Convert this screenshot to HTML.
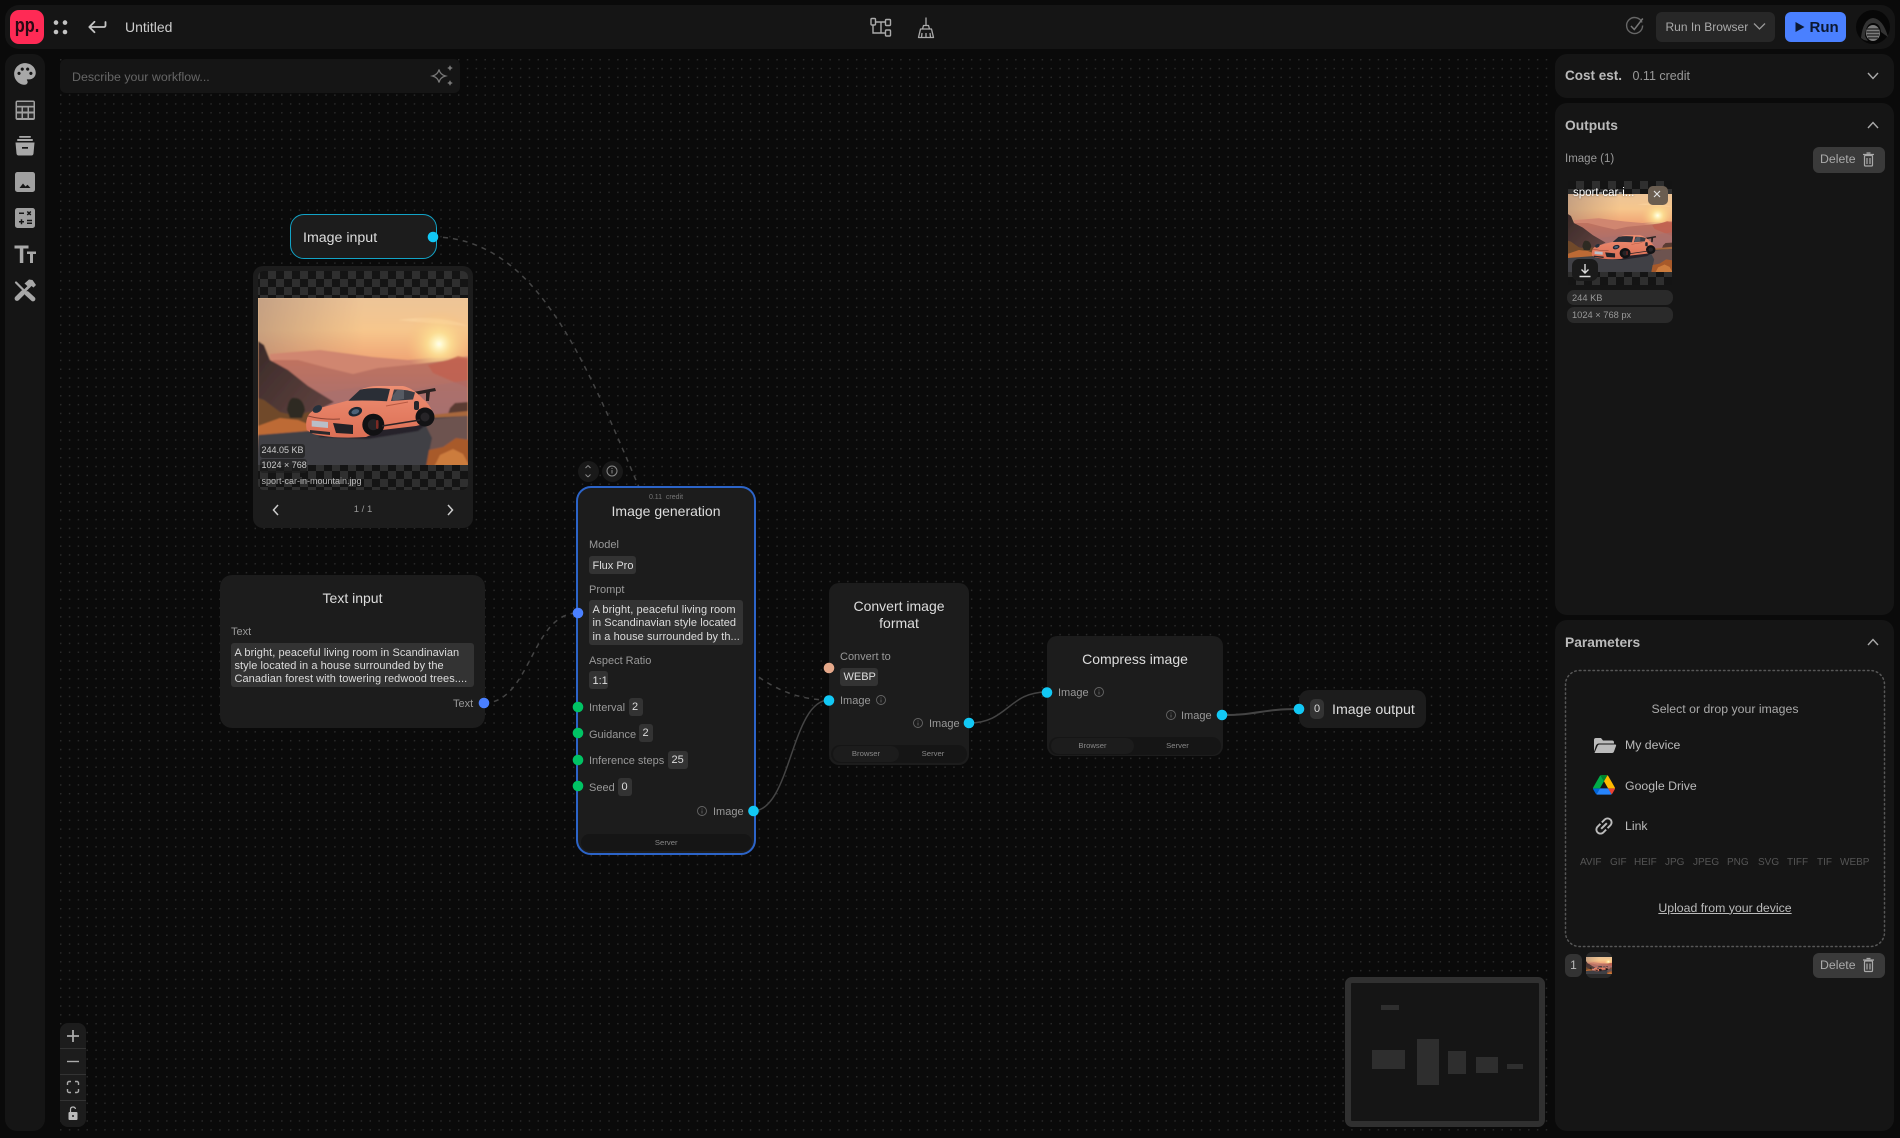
<!DOCTYPE html>
<html lang="en"><head><meta charset="utf-8"><title>Untitled</title>
<style>
*{box-sizing:border-box}
html,body{margin:0;padding:0;background:#0a0a0a;width:1900px;height:1138px;overflow:hidden}
body{position:relative;font-family:"Liberation Sans",Arial,sans-serif;color:#ddd}
.b{position:absolute}
.t{position:absolute;white-space:nowrap;line-height:16px;height:16px}
.c{text-align:center}
.node{position:absolute;background:#1c1c1c}
.chip{position:absolute;background:#333;border-radius:3px;color:#ddd;font-size:11px;line-height:18px;padding:0 3.5px;white-space:nowrap}
.lb{font-size:11px;color:#999;margin-top:1px}
.ck{background-color:#151515;background-image:repeating-conic-gradient(#2f2f2f 0 25%,#141414 0 50%);background-size:16px 16px}
.dl{position:absolute;background:#3a3a3a;border-radius:6px;color:#aaa;font-size:12.3px;line-height:25px;padding-left:7px}
svg{position:absolute;left:0;top:0;overflow:visible}
</style></head>
<body>
<svg width="0" height="0" style="position:absolute">
<defs>
<filter id="soft" x="-5%" y="-5%" width="110%" height="110%"><feGaussianBlur stdDeviation=".7"/></filter>
<linearGradient id="sky" x1="0" y1="0" x2="0" y2="1"><stop offset="0" stop-color="#ecc498"/><stop offset=".2" stop-color="#f6c68c"/><stop offset=".38" stop-color="#f0a474"/></linearGradient>
<linearGradient id="skyL" x1="0" y1="0" x2="1" y2="0"><stop offset="0" stop-color="#9b7c70" stop-opacity=".5"/><stop offset=".5" stop-color="#a8806c" stop-opacity="0"/></linearGradient>
<radialGradient id="sun" cx="181" cy="46" r="34" gradientUnits="userSpaceOnUse"><stop offset="0" stop-color="#fffdf0"/><stop offset=".1" stop-color="#fff8c8"/><stop offset=".35" stop-color="#fde394" stop-opacity=".8"/><stop offset="1" stop-color="#f7be7c" stop-opacity="0"/></radialGradient>
<linearGradient id="ml" x1="0" y1="0" x2="1" y2="1"><stop offset="0" stop-color="#3a2a28"/><stop offset="1" stop-color="#664643"/></linearGradient>
<linearGradient id="haze" x1="0" y1="0" x2="0" y2="1"><stop offset="0" stop-color="#c0725f"/><stop offset="1" stop-color="#a46f70"/></linearGradient>
<linearGradient id="carb" x1="0" y1="0" x2="0" y2="1"><stop offset="0" stop-color="#ee8e72"/><stop offset="1" stop-color="#dc6f55"/></linearGradient>
<symbol id="car" viewBox="0 0 210 167" preserveAspectRatio="none">
<g filter="url(#soft)">
<rect x="-2" y="-2" width="214" height="171" fill="url(#sky)"/>
<rect width="210" height="110" fill="url(#skyL)"/>
<path d="M140 22Q180 16 210 28Q170 25 140 22z" fill="#fbd7a4" opacity=".6"/>
<path d="M12 56L35 54L62 52L85 55L115 59L150 62L172 60L195 60L210 58V120H12z" fill="#d08670"/>
<rect width="210" height="66" fill="url(#sun)"/>
<path d="M15 62L40 62L70 70L95 76L120 70L160 66L185 63L200 60L210 62V120H15z" fill="url(#haze)"/>
<path d="M170 67L190 62L200 58L210 60V90L175 75z" fill="#c2604c" opacity=".75"/>
<path d="M60 95L110 88L150 92L210 82V118H60z" fill="#a86e6e" opacity=".6"/>
<path d="M0 43L6 47L12 62L30 72L50 88L76 104L60 112L30 122L0 132z" fill="url(#ml)"/>
<path d="M0 100L6 102L14 108L22 114L38 118L50 114L70 115L95 118L95 130L50 135L0 138z" fill="#6f4a2a"/>
<path d="M29 112Q31 98 37 100Q45 100 47 112L44 120L32 120z" fill="#2e2a20"/>
<path d="M0 128L22 120L40 122L55 128L60 136L0 138z" fill="#bd6a34"/>
<path d="M192 110L197 105L210 104V114L190 116z" fill="#5a3a30"/>
<path d="M172 117L210 113V119L172 121z" fill="#a8683c"/>
<path d="M0 137L50 133L170 120L210 118V169H-2z" fill="#3f3f45"/>
<path d="M165 122L210 118V169H168L174 140z" fill="#6d5350"/>
<path d="M168 169L171 152L185 149L198 140L212 142V169z" fill="#a85a2c"/>
<path d="M176 169L182 157L195 151L205 156L212 169z" fill="#cc7c3e"/>
<path d="M60 139L110 141L160 133L175 122L130 128L70 132z" fill="#252429"/>
</g>
<path d="M150 95L177 90L178 93L172 94L171 103L168 103L168 95L152 98z" fill="#2a2221"/>
<path d="M48.7 132Q47 124 50 118Q52 113 62 110L92 102L102 92Q110 88 120 88L145 88Q155 90 165 101Q174 108 175 118L174 124L158 128L124 132L108 139Q75 141 55 136z" fill="url(#carb)"/>
<path d="M90.3 102.7L102 91.7Q115 89 132 91L129 103.3Q110 102 90.3 102.7z" fill="#2a2e36"/>
<path d="M133 103L136 91.500Q148 91 157 94.500L155 101.500z" fill="#3a3c44"/>
<path d="M134.500 98L139 92L146 92L146 101L134.500 103z" fill="#565a63"/>
<ellipse cx="97.3" cy="113.7" rx="7" ry="4.5" transform="rotate(-18 97.3 113.7)" fill="#1c2733"/><ellipse cx="97.3" cy="113.7" rx="4" ry="2.4" transform="rotate(-18 97.3 113.7)" fill="#4d6278"/>
<ellipse cx="59.3" cy="111" rx="5" ry="3.4" transform="rotate(-30 59.3 111)" fill="#26303c"/>
<path d="M53.7 122.500L70 124L70 130L53.7 128.500z" fill="#b9bfc8"/>
<path d="M50 118Q65 122 82 121" stroke="#8d4636" stroke-width="1" fill="none"/>
<path d="M75 125L95 127L95 136L78 135z" fill="#222126"/>
<path d="M52 132L72 134L72 137L52 135z" fill="#2a282c"/>
<rect x="156" y="103" width="5" height="9" rx="2" fill="#26262b"/>
<path d="M128 108L150 104" stroke="#b85a42" stroke-width="1"/>
<circle cx="115.3" cy="126.700" r="11" fill="#111113"/><circle cx="115.3" cy="126.700" r="5.500" fill="#242225"/><rect x="118" y="122" width="2.500" height="9" rx="1.200" fill="#7c2a24"/>
<circle cx="167" cy="119" r="9.500" fill="#131315"/><circle cx="167" cy="119" r="4.500" fill="#262427"/>
<path d="M124 128L162 122" stroke="#2c2326" stroke-width="1.600"/>
</symbol>
</defs>
</svg>

<!-- canvas grid -->
<div class="b" style="left:60px;top:54px;width:1490px;height:1078px;background-image:radial-gradient(circle at .7px .7px,#2a2a2a .7px,transparent .95px);background-size:8.85px 8.85px;background-position:0 5px"></div>

<!-- chrome -->
<div class="b" style="left:5px;top:5px;width:1890px;height:44px;background:#151515;border-radius:14px"></div>
<div class="b" style="left:5px;top:54px;width:40px;height:1077px;background:#151515;border-radius:12px"></div>
<div class="b" style="left:10px;top:10px;width:34px;height:34px;background:#ff2a55;border-radius:9px"></div>
<div class="t" style="left:10px;top:17px;width:34px;height:18px;text-align:center;font-size:20px;font-weight:700;line-height:18px;color:#2a0a14;transform:scaleX(.82)">pp.</div>
<div class="t" style="left:125px;top:19px;font-size:14px;color:#ccc">Untitled</div>

<div class="b" style="left:60px;top:59px;width:400px;height:34px;background:#151515;border-radius:6px"></div>
<div class="t" style="left:72px;top:69px;font-size:12.4px;color:#666">Describe your workflow...</div>

<!-- header right -->
<div class="b" style="left:1656px;top:12px;width:119px;height:30px;background:#272727;border-radius:6px"></div>
<div class="t" style="left:1665.5px;top:18.5px;font-size:12px;color:#aaa">Run In Browser</div>
<div class="b" style="left:1785px;top:12px;width:61px;height:30px;background:#4a80ff;border-radius:6px"></div>
<div class="t" style="left:1809.5px;top:19.5px;font-size:15px;font-weight:700;color:#0c1830">Run</div>

<!-- right panels -->
<div class="b" style="left:1555px;top:54px;width:339px;height:44px;background:#151515;border-radius:12px"></div>
<div class="t" style="left:1565px;top:68px;font-size:13.5px;font-weight:700;color:#bbb">Cost est.</div>
<div class="t" style="left:1632.500px;top:68px;font-size:12.5px;color:#999">0.11 credit</div>

<div class="b" style="left:1555px;top:103px;width:339px;height:512px;background:#151515;border-radius:12px"></div>
<div class="t" style="left:1565px;top:118px;font-size:13.8px;font-weight:700;color:#bbb">Outputs</div>
<div class="t" style="left:1565px;top:151px;font-size:11.5px;color:#999">Image (1)</div>
<div class="dl" style="left:1813px;top:147px;width:72px;height:26px">Delete</div>

<div class="b ck" style="left:1568px;top:181px;width:104px;height:104px;background-position:0 0"></div>
<svg class="b" style="left:1568px;top:194px" width="104" height="78"><use href="#car" width="104" height="78"/></svg>
<div class="t" style="left:1573px;top:185px;font-size:11.5px;color:#fff;text-shadow:0 0 2px rgba(0,0,0,.6)">sport-car-i...</div>
<div class="b" style="left:1648px;top:186px;width:20px;height:19px;background:#6a5d50;border-radius:5px"></div>
<div class="b" style="left:1572px;top:259px;width:26px;height:22px;background:#1a1a1a;border-radius:7px"></div>
<div class="b" style="left:1567px;top:290px;width:106px;height:15px;background:#2a2a2a;border-radius:7px"></div>
<div class="t" style="left:1572px;top:289.5px;font-size:9.3px;color:#999">244 KB</div>
<div class="b" style="left:1567px;top:307px;width:106px;height:16px;background:#2a2a2a;border-radius:7px"></div>
<div class="t" style="left:1572px;top:307px;font-size:9.3px;color:#999">1024 × 768 px</div>

<div class="b" style="left:1555px;top:620px;width:339px;height:511px;background:#151515;border-radius:12px"></div>
<div class="t" style="left:1565px;top:635px;font-size:13.8px;font-weight:700;color:#bbb">Parameters</div>
<div class="t c" style="left:1565px;width:320px;top:701px;font-size:12.3px;color:#aaa">Select or drop your images</div>
<div class="t" style="left:1625px;top:737px;font-size:12.3px;color:#bbb">My device</div>
<div class="t" style="left:1625px;top:778px;font-size:12.3px;color:#bbb">Google Drive</div>
<div class="t" style="left:1625px;top:818px;font-size:12.3px;color:#bbb">Link</div>
<div style="font-size:10px;color:#555">
<span class="t" style="left:1580px;top:855px">AVIF</span><span class="t" style="left:1610px;top:855px">GIF</span><span class="t" style="left:1634px;top:855px">HEIF</span><span class="t" style="left:1665px;top:855px">JPG</span><span class="t" style="left:1693px;top:855px">JPEG</span><span class="t" style="left:1727px;top:855px">PNG</span><span class="t" style="left:1758px;top:855px">SVG</span><span class="t" style="left:1787px;top:855px">TIFF</span><span class="t" style="left:1817px;top:855px">TIF</span><span class="t" style="left:1840px;top:855px">WEBP</span>
</div>
<div class="t c" style="left:1565px;width:320px;top:899.5px;font-size:12.3px;color:#bbb;text-decoration:underline">Upload from your device</div>
<div class="t c" style="left:1565px;top:954px;width:17px;height:23px;line-height:23px;background:#333;border-radius:6px;font-size:12px;color:#bbb">1</div>
<div class="b" style="left:1586px;top:952px;width:26px;height:26px;background:#2a2a2a;border-radius:6px"></div>
<svg class="b" style="left:1586px;top:957px" width="26" height="17"><use href="#car" width="26" height="17"/></svg>
<div class="dl" style="left:1813px;top:953px;width:72px;height:25px">Delete</div>

<!-- minimap -->
<div class="b" style="left:1345px;top:977px;width:200px;height:150px;background:#151515;border:6.5px solid #303030;border-radius:7px"></div>
<div class="b" style="left:1381px;top:1005px;width:18px;height:5px;background:#2e2e2e"></div>
<div class="b" style="left:1372px;top:1050px;width:33px;height:19px;background:#2e2e2e"></div>
<div class="b" style="left:1417px;top:1039px;width:22px;height:46px;background:#2e2e2e"></div>
<div class="b" style="left:1448px;top:1051px;width:18px;height:23px;background:#2e2e2e"></div>
<div class="b" style="left:1476px;top:1057px;width:22px;height:16px;background:#2e2e2e"></div>
<div class="b" style="left:1507px;top:1064px;width:16px;height:5px;background:#2e2e2e"></div>

<!-- zoom controls -->
<div class="b" style="left:60px;top:1023px;width:26px;height:104px;background:#1c1c1c;border-radius:8px"></div>
<div class="b" style="left:60px;top:1048px;width:26px;height:1px;background:#333"></div>
<div class="b" style="left:60px;top:1074px;width:26px;height:1px;background:#333"></div>
<div class="b" style="left:60px;top:1100px;width:26px;height:1px;background:#333"></div>

<!-- wires -->
<svg width="1900" height="1138" fill="none">
<path d="M433 237C631 237 631 700 829 700" stroke="#444" stroke-width="1.5" stroke-dasharray="5 5"/>
<path d="M484 703C531 703 531 613 578 613" stroke="#444" stroke-width="1.5" stroke-dasharray="5 5"/>
<path d="M753 811C791 811 791 700 829 700" stroke="#444" stroke-width="1.5"/>
<path d="M969 723C1008 723 1008 692 1047 692" stroke="#444" stroke-width="1.5"/>
<path d="M1222 715C1260 715 1260 709 1299 709" stroke="#444" stroke-width="2"/>
</svg>

<!-- image input -->
<div class="node" style="left:290px;top:214px;width:147px;height:45px;border:1.2px solid #12a3c6;border-radius:14px"></div>
<div class="t" style="left:303px;top:229.5px;font-size:14.2px;color:#ddd">Image input</div>
<div class="node" style="left:253px;top:266px;width:220px;height:262px;border-radius:10px"></div>
<div class="b ck" style="left:258px;top:271px;width:210px;height:219px;border-radius:6px;background-position:2px 0"></div>
<svg class="b" style="left:258px;top:298px" width="210" height="167"><use href="#car" width="210" height="167"/></svg>
<div class="b" style="left:260px;top:444px;width:45px;height:14px;background:rgba(30,30,30,.7);border-radius:3px"></div>
<div class="b" style="left:260px;top:459px;width:47px;height:14px;background:rgba(30,30,30,.7);border-radius:3px"></div>
<div class="t" style="left:261.5px;top:440.5px;font-size:9px;color:#ccc;line-height:19px">244.05 KB</div>
<div class="t" style="left:261.5px;top:456px;font-size:9px;color:#ccc;line-height:19px">1024 × 768</div>
<div class="t" style="left:261.5px;top:473px;font-size:9px;color:#bbb;line-height:17px">sport-car-in-mountain.jpg</div>
<div class="t c" style="left:253px;width:220px;top:502px;font-size:9.5px;color:#999">1 / 1</div>

<!-- text input -->
<div class="node" style="left:220px;top:575px;width:265px;height:153px;border-radius:12px"></div>
<div class="t c" style="left:220px;width:265px;top:590px;font-size:14px;color:#ddd">Text input</div>
<div class="t lb" style="left:231px;top:623px">Text</div>
<div class="b" style="left:231px;top:643px;width:243px;height:44px;background:#333;border-radius:3px"></div>
<div class="t" style="left:234.5px;top:645px;font-size:11px;color:#ddd;letter-spacing:.06px">A bright, peaceful living room in Scandinavian</div>
<div class="t" style="left:234.5px;top:658px;font-size:11px;color:#ddd;letter-spacing:.06px">style located in a house surrounded by the</div>
<div class="t" style="left:234.5px;top:671px;font-size:11px;color:#ddd;letter-spacing:.06px">Canadian forest with towering redwood trees....</div>
<div class="t lb" style="left:453px;top:695px">Text</div>

<!-- generation -->
<div class="b" style="left:577.5px;top:461px;width:21px;height:21px;background:#191919;border-radius:50%"></div>
<div class="b" style="left:601.5px;top:461px;width:21px;height:21px;background:#191919;border-radius:50%"></div>
<div class="node" style="left:576px;top:486px;width:180px;height:369px;border:2px solid #2c64c8;border-radius:15px"></div>
<div class="t c" style="left:576px;width:180px;top:490px;font-size:7px;color:#777">0.11&nbsp; credit</div>
<div class="t c" style="left:576px;width:180px;top:503px;font-size:14px;color:#ddd">Image generation</div>
<div class="t lb" style="left:589px;top:536px">Model</div>
<div class="chip" style="left:589px;top:556px;width:47px;height:18px;line-height:20px">Flux Pro</div>
<div class="t lb" style="left:589px;top:581px">Prompt</div>
<div class="b" style="left:589px;top:600px;width:154px;height:45px;background:#333;border-radius:3px"></div>
<div class="t" style="left:592.5px;top:602px;font-size:11px;color:#ddd;letter-spacing:.06px">A bright, peaceful living room</div>
<div class="t" style="left:592.5px;top:615px;font-size:11px;color:#ddd;letter-spacing:.06px">in Scandinavian style located</div>
<div class="t" style="left:592.5px;top:629px;font-size:11px;color:#ddd;letter-spacing:.06px">in a house surrounded by th...</div>
<div class="t lb" style="left:589px;top:652px">Aspect Ratio</div>
<div class="chip" style="left:589px;top:671px;width:19px;height:18px;line-height:20px">1:1</div>
<div class="t lb" style="left:589px;top:699px">Interval</div>
<div class="chip" style="left:628.5px;top:698px;width:14.5px;height:18px">2</div>
<div class="t lb" style="left:589px;top:725.5px">Guidance</div>
<div class="chip" style="left:639px;top:724px;width:14px;height:18px">2</div>
<div class="t lb" style="left:589px;top:752px">Inference steps</div>
<div class="chip" style="left:668px;top:751px;width:20px;height:18px">25</div>
<div class="t lb" style="left:589px;top:778.5px">Seed</div>
<div class="chip" style="left:618px;top:778px;width:14px;height:18px">0</div>
<div class="t lb" style="left:713px;top:803px">Image</div>
<div class="b" style="left:581px;top:834px;width:170.5px;height:17px;background:#151515;border-radius:9px"></div>
<div class="t c" style="left:581px;width:170.5px;top:834.5px;font-size:7.7px;color:#888">Server</div>

<!-- convert -->
<div class="node" style="left:829px;top:583px;width:140px;height:182px;border-radius:10px"></div>
<div class="t c" style="left:829px;width:140px;top:598px;font-size:14px;color:#ddd">Convert image</div>
<div class="t c" style="left:829px;width:140px;top:615px;font-size:14px;color:#ddd">format</div>
<div class="t lb" style="left:840px;top:648px">Convert to</div>
<div class="chip" style="left:840px;top:668px;width:38px;height:18px">WEBP</div>
<div class="t lb" style="left:840px;top:692px">Image</div>
<div class="t lb" style="left:929px;top:715px">Image</div>
<div class="b" style="left:831px;top:745px;width:136px;height:18px;background:#151515;border-radius:9px"></div>
<div class="b" style="left:833px;top:746px;width:66px;height:16px;background:#1c1c1c;border-radius:8px"></div>
<div class="t c" style="left:833px;width:66px;top:745.5px;font-size:7.7px;color:#888">Browser</div>
<div class="t c" style="left:900px;width:66px;top:745.5px;font-size:7.7px;color:#888">Server</div>

<!-- compress -->
<div class="node" style="left:1047px;top:636px;width:176px;height:120px;border-radius:10px"></div>
<div class="t c" style="left:1047px;width:176px;top:651px;font-size:14px;color:#ddd">Compress image</div>
<div class="t lb" style="left:1058px;top:684px">Image</div>
<div class="t lb" style="left:1181px;top:707px">Image</div>
<div class="b" style="left:1049px;top:737px;width:172px;height:18px;background:#151515;border-radius:9px"></div>
<div class="b" style="left:1051px;top:738px;width:83px;height:16px;background:#1c1c1c;border-radius:8px"></div>
<div class="t c" style="left:1051px;width:83px;top:737.5px;font-size:7.7px;color:#888">Browser</div>
<div class="t c" style="left:1135px;width:85px;top:737.5px;font-size:7.7px;color:#888">Server</div>

<!-- output -->
<div class="node" style="left:1299px;top:690px;width:127px;height:38px;border-radius:10px"></div>
<div class="t c" style="left:1310px;top:699px;width:14px;height:20px;line-height:20px;background:#333;border-radius:5px;font-size:11px;color:#ddd">0</div>
<div class="t" style="left:1332px;top:702px;font-size:14.2px;color:#ddd">Image output</div>

<!-- icons & ports -->
<svg width="1900" height="1138" fill="none">
<rect x="1565.5" y="670.500" width="319" height="276" rx="14" stroke="#565656" stroke-width="1.500" stroke-dasharray="1.500 3" stroke-linecap="round"/>
<!-- header -->
<g fill="#c4c4c4"><circle cx="56" cy="22.600" r="2.300"/><circle cx="65" cy="22.600" r="2.300"/><circle cx="56" cy="32" r="2.300"/><circle cx="65" cy="32" r="2.300"/></g>
<path d="M105.500 22v3.500a1.500 1.500 0 0 1-1.500 1.500H90M94.500 21.800L89.300 27l5.200 5.200" stroke="#c4c4c4" stroke-width="1.800" stroke-linecap="round" stroke-linejoin="round"/>
<g stroke="#aaa" stroke-width="1.400"><rect x="871" y="18.500" width="4.500" height="6.500" rx="1"/><rect x="885.500" y="19.500" width="5" height="6" rx="1"/><rect x="885.500" y="30" width="5" height="6" rx="1"/><path d="M875.500 22h10M873 25v8h12.500M881 22v11"/></g>
<path d="M926 17.500v8M923.500 25.500h5l1 3.500h-7zM920.500 29h11l2 8.500h-15zM922 33l-.5 4.500M926 33v4.500M930 33l.5 4.500" stroke="#aaa" stroke-width="1.300" stroke-linejoin="round"/>
<path d="M1642 22.500a8 8 0 1 0 .6 3" stroke="#666" stroke-width="1.400"/><path d="M1631 26l3.300 3.500 8.500-11" stroke="#777" stroke-width="1.500"/>
<path d="M1754 23.500l5.500 5.500 5.500-5.500" stroke="#999" stroke-width="1.300"/>
<path d="M1795.500 22l9 5-9 5z" fill="#0c1830"/>
<circle cx="1873" cy="27" r="17" fill="#070707"/>
<path d="M1861 38Q1863 19 1873 18Q1883 19 1888 37L1881 32Q1880 23 1873 23Q1866 23 1865 36L1868 41L1864 40z" fill="#333"/>
<ellipse cx="1873" cy="33" rx="7" ry="8" fill="#7c7c7c"/>
<path d="M1867 29h12M1866.500 32h13M1867 35h12M1868 38h10" stroke="#1e1e1e" stroke-width="1.200"/>
<!-- sparkle -->
<path d="M439 69.500q1 5 6.500 6.500q-5.500 1.500-6.500 6.500q-1-5-6.500-6.500q5.500-1.500 6.500-6.500z" stroke="#777" stroke-width="1.300"/>
<path d="M450 65q.7 2.500 3 3q-2.300 .5-3 3q-.7-2.500-3-3q2.300-.5 3-3zM450 80q.7 2.500 3 3q-2.300 .5-3 3q-.7-2.500-3-3q2.300-.5 3-3z" fill="#777"/>
<!-- sidebar -->
<path transform="translate(12 61) scale(1.08)" fill="#a8a8a8" d="M12 2C6.490 2 2 6.490 2 12s4.490 10 10 10c1.380 0 2.500-1.120 2.500-2.500 0-.61-.23-1.200-.64-1.670-.08-.1-.13-.21-.13-.33 0-.28.22-.5.5-.5H16c3.310 0 6-2.690 6-6 0-4.960-4.490-9-10-9zm5.500 11c-.83 0-1.500-.67-1.500-1.500s.67-1.500 1.500-1.500 1.500.67 1.500 1.500-.67 1.500-1.500 1.500zm-3-4c-.83 0-1.500-.67-1.500-1.500S13.670 6 14.500 6s1.500.67 1.500 1.500S15.330 9 14.500 9zM5 11.500c0-.83.67-1.500 1.500-1.500s1.500.67 1.500 1.500S7.330 13 6.500 13 5 12.330 5 11.500zm6-4c0 .83-.67 1.500-1.500 1.500S8 8.330 8 7.500 8.670 6 9.500 6s1.500.67 1.500 1.500z"/>
<rect x="15.500" y="100.500" width="19.500" height="19.500" rx="2" fill="#a0a0a0"/>
<g fill="#2a2a2a"><rect x="17" y="102" width="16.500" height="3.800"/><rect x="17" y="107.500" width="4.500" height="4"/><rect x="23" y="107.500" width="4.500" height="4"/><rect x="29" y="107.500" width="4.500" height="4"/><rect x="17" y="113.500" width="4.500" height="4.500"/><rect x="23" y="113.500" width="4.500" height="4.500"/><rect x="29" y="113.500" width="4.500" height="4.500"/></g>
<g fill="#a8a8a8"><rect x="19" y="136" width="12" height="1.800" rx=".9"/><rect x="17" y="139" width="16" height="2" rx="1"/><path d="M15.500 142.500h19l-1 11q-.2 2-2.200 2h-12.600q-2 0-2.200-2z"/></g>
<rect x="22" y="147" width="6" height="1.700" fill="#151515"/>
<rect x="15" y="172" width="20" height="20" rx="2.500" fill="#a0a0a0"/><path d="M19.500 188l3.500-4.500 2.500 3 2-1.800 3 3.300z" fill="#151515"/>
<rect x="15" y="208" width="20" height="20" rx="2.500" fill="#a0a0a0"/>
<g stroke="#151515" stroke-width="1.500"><path d="M19 213.300h5M27.300 211.500l3.500 3.500M30.800 211.500l-3.500 3.500M19 221.800h5M21.500 219.300v5M27 220.500h5M27 223.300h5"/></g>
<g fill="#a8a8a8"><path d="M14.500 245.500h14v3h-5.200v14.500h-3.500v-14.500h-5.300z"/><path d="M27 251.500h9v2.500h-3v9h-3v-9h-3z"/></g>
<g stroke="#a8a8a8" stroke-linecap="round"><path d="M16 282.500L27 293.500" stroke-width="2.200"/><path d="M27 293.500L33 299" stroke-width="4.800"/><path d="M17 298.500L23 292.500" stroke-width="4.800"/><path d="M23 292.500L29 286.500" stroke-width="2.800"/></g>
<path d="M24.500 283.500l4.500-4 3.500.5 3.500 5-2.500 2.500-2-1.500-2 2z" fill="#a8a8a8"/>
<!-- right icons -->
<g stroke="#aaa" stroke-width="1.400"><path d="M1868 73l5 5.500 5-5.500M1868 128l5-5.500 5 5.500M1868 645l5-5.500 5 5.500"/></g>
<g stroke="#aaa" stroke-width="1.200" fill="none"><rect x="1864.500" y="155.500" width="8" height="10.500" rx="1"/><path d="M1863 154.500h11M1866.500 153h4M1867 158v6M1870 158v6"/></g>
<g stroke="#aaa" stroke-width="1.200" fill="none"><rect x="1864.500" y="961" width="8" height="10.500" rx="1"/><path d="M1863 960h11M1866.500 958.500h4M1867 963.500v6M1870 963.500v6"/></g>
<path d="M1654 191l6 6M1660 191l-6 6" stroke="#e0e0e0" stroke-width="1.200"/>
<path d="M1585 264v9M1581.500 269.500l3.500 3.500 3.500-3.500M1579.500 276.500h11" stroke="#ddd" stroke-width="1.400"/>
<!-- folder -->
<path d="M1594 740q0-2 2-2h5l2 2.500h9q2 0 2 2v1h-15q-2 0-3 2l-2 6z" fill="#bbb"/>
<path d="M1594.500 753l3-7q.5-1.500 2-1.500h15.500q1.500 0 1 1.500l-2 5.500q-.5 1.500-2 1.500z" fill="#bbb"/>
<!-- drive -->
<g transform="translate(1593 775) scale(.252)">
<path d="m6.600 66.850 3.850 6.650c.8 1.400 1.950 2.500 3.300 3.300l13.750-23.800h-27.500c0 1.550.4 3.100 1.200 4.500z" fill="#0066da"/>
<path d="m43.650 25-13.750-23.800c-1.350.8-2.500 1.900-3.300 3.300l-25.400 44a9.060 9.060 0 0 0 -1.200 4.500h27.500z" fill="#00ac47"/>
<path d="m73.550 76.800c1.350-.8 2.500-1.900 3.300-3.300l1.600-2.750 7.650-13.250c.8-1.400 1.200-2.950 1.200-4.500h-27.502l5.852 11.500z" fill="#ea4335"/>
<path d="m43.650 25 13.750-23.800c-1.350-.8-2.900-1.200-4.500-1.200h-18.500c-1.600 0-3.150.45-4.500 1.200z" fill="#00832d"/>
<path d="m59.800 53h-32.300l-13.750 23.800c1.350.8 2.900 1.200 4.500 1.200h50.800c1.600 0 3.150-.45 4.500-1.200z" fill="#2684fc"/>
<path d="m73.400 26.500-12.700-22c-.8-1.400-1.950-2.500-3.300-3.300l-13.750 23.800 16.150 28h27.450c0-1.550-.4-3.100-1.200-4.500z" fill="#ffba00"/>
</g>
<!-- link -->
<g transform="translate(1592 814) rotate(-45 12 12)"><path fill="#bbb" d="M3.900 12c0-1.710 1.390-3.100 3.100-3.100h4V7H7c-2.760 0-5 2.240-5 5s2.240 5 5 5h4v-1.900H7c-1.710 0-3.100-1.390-3.100-3.100zM8 13h8v-2H8v2zm9-6h-4v1.900h4c1.710 0 3.100 1.390 3.100 3.100s-1.390 3.100-3.100 3.100h-4V17h4c2.760 0 5-2.240 5-5s-2.240-5-5-5z"/></g>
<!-- zoom ctl -->
<path d="M73 1030v12M67 1036h12" stroke="#aaa" stroke-width="1.800"/><path d="M67 1061.500h12" stroke="#aaa" stroke-width="1.400"/>
<path d="M67.500 1085v-2a1.500 1.500 0 0 1 1.500-1.500h2M75 1081.500h2a1.500 1.500 0 0 1 1.500 1.500v2M78.500 1089v2a1.500 1.500 0 0 1-1.500 1.500h-2M71 1092.500h-2a1.500 1.500 0 0 1-1.500-1.500v-2" stroke="#aaa" stroke-width="1.400"/>
<rect x="68.500" y="1112" width="9" height="8" rx="1" fill="#bbb"/><path d="M70.500 1112v-2.500q0-2.500 2.500-2.500q2 0 2.500 2" stroke="#bbb" stroke-width="1.200"/><circle cx="73" cy="1116" r="1" fill="#1c1c1c"/>
<!-- node icons -->
<path d="M588 465.500l2.500 2.500M588 465.500l-2.500 2.500M588 477l2.500-2.500M588 477l-2.500-2.500" stroke="#888" stroke-width="1"/>
<g stroke="#888" stroke-width="1"><circle cx="612" cy="471" r="5"/><path d="M612 470v3.500M612 468v1"/></g>
<g stroke="#666" stroke-width=".9"><circle cx="702" cy="811" r="4.500"/><path d="M702 810.500v3M702 808.500v1"/><circle cx="881" cy="700" r="4.500"/><path d="M881 699.500v3M881 697.500v1"/><circle cx="918" cy="723" r="4.500"/><path d="M918 722.500v3M918 720.500v1"/><circle cx="1099" cy="692" r="4.500"/><path d="M1099 691.500v3M1099 689.500v1"/><circle cx="1171" cy="715" r="4.500"/><path d="M1171 714.500v3M1171 712.500v1"/></g>
<path d="M278 505l-4.500 5 4.500 5M448 505l4.500 5-4.500 5" stroke="#ccc" stroke-width="1.500"/>
<!-- ports -->
<g fill="#12c8f5"><circle cx="433" cy="237" r="5.300"/><circle cx="753.500" cy="811" r="5.300"/><circle cx="829" cy="700.500" r="5.300"/><circle cx="969" cy="723" r="5.300"/><circle cx="1047" cy="692.500" r="5.300"/><circle cx="1222" cy="715" r="5.300"/><circle cx="1299" cy="709" r="5.300"/></g>
<g fill="#4a80ff"><circle cx="484" cy="703" r="5.300"/><circle cx="578" cy="613" r="5.300"/></g>
<g fill="#00c364"><circle cx="578" cy="707" r="5.300"/><circle cx="578" cy="733" r="5.300"/><circle cx="578" cy="760" r="5.300"/><circle cx="578" cy="786" r="5.300"/></g>
<circle cx="829" cy="668" r="5.300" fill="#e5a88a"/>
</svg>
</body></html>
